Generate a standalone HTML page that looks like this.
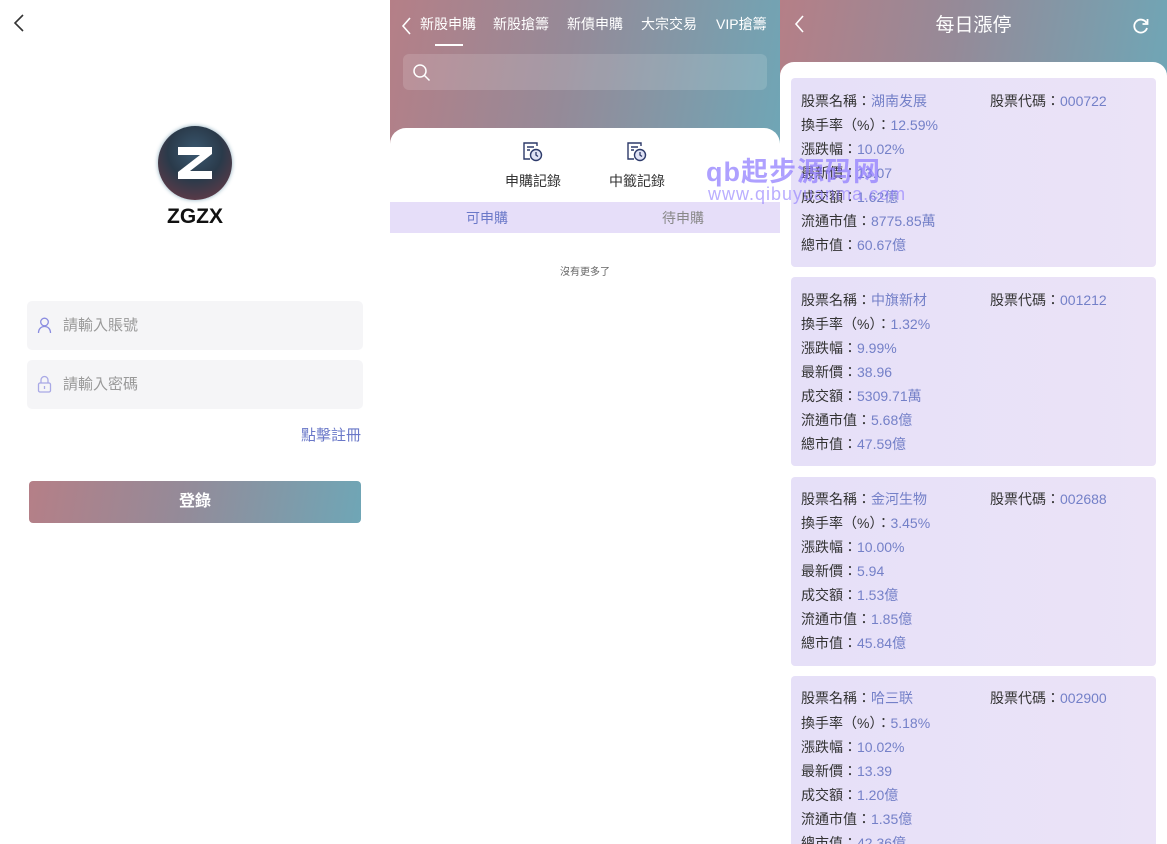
<!DOCTYPE html>
<html><head><meta charset="utf-8"><style>
*{margin:0;padding:0;box-sizing:border-box}
body{width:1167px;height:844px;overflow:hidden;position:relative;background:#fff;font-family:"Liberation Sans","Noto Sans CJK TC",sans-serif;}
.abs{position:absolute}
.grad{background:linear-gradient(100deg,#b57f87 0%,#958a98 45%,#6fa6b6 100%)}
.p1{left:0;top:0;width:390px;height:844px;background:#fff}
.p2{left:390px;top:0;width:390px;height:844px;background:#fff;overflow:hidden}
.p3{left:780px;top:0;width:387px;height:844px;background:#fff;overflow:hidden}
.inp{position:absolute;left:27px;width:336px;height:49px;background:#f5f5f7;border-radius:5px;font-size:15px;color:#999;line-height:49px;padding-left:36px}
.tab{position:absolute;top:14px;font-size:14px;color:#fff;white-space:nowrap}
.card{position:absolute;left:11px;width:365px;height:189px;background:linear-gradient(90deg,#e6e0f8,#ebe3f7);border-radius:4px;font-size:14px;color:#333}
.card div{position:absolute;left:10px;white-space:nowrap}
.card span{color:#7480c8}
</style></head><body>
<div class="abs p1">
<svg class="abs" style="left:12px;top:13px" width="16" height="20"><path d="M11 2L3 10l8 8" fill="none" stroke="#333" stroke-width="1.6"/></svg>
<div class="abs" style="left:158px;top:126px;width:74px;height:74px;border-radius:50%;background:radial-gradient(circle at 50% 35%,#3a5870 0%,#2a3a4a 45%,#5a3a48 80%,#c0909c 100%);box-shadow:0 0 4px #8ab">
<svg style="position:absolute;left:18px;top:21px" width="38" height="32"><path d="M2 0h34v7L14 24h22v8H2v-7L24 8H2z" fill="#fff"/></svg></div>
<div class="abs" style="left:0;width:390px;top:205px;text-align:center;font-weight:bold;font-size:21px;color:#111">ZGZX</div>
<div class="inp" style="top:301px">請輸入賬號</div>
<svg class="abs" style="left:37px;top:317px" width="15" height="17"><circle cx="7.5" cy="5" r="3.8" fill="none" stroke="#8a8ce0" stroke-width="1.3"/><path d="M1.5 16c0-4 2.5-6.5 6-6.5s6 2.5 6 6.5" fill="none" stroke="#8a8ce0" stroke-width="1.3"/></svg>
<div class="inp" style="top:360px">請輸入密碼</div>
<svg class="abs" style="left:37px;top:375px" width="15" height="18"><path d="M4 8V5a3.5 3.5 0 017 0v3" fill="none" stroke="#a9a9e6" stroke-width="1.3"/><rect x="1.5" y="8" width="12" height="9" rx="1.5" fill="none" stroke="#a9a9e6" stroke-width="1.3"/><path d="M7.5 11v3" stroke="#a9a9e6" stroke-width="1.3"/></svg>
<div class="abs" style="right:29px;top:424px;font-size:15px;color:#6a78c8">點擊註冊</div>
<div class="abs grad" style="left:29px;top:481px;width:332px;height:42px;border-radius:4px;color:#fff;font-weight:bold;font-size:16px;text-align:center;line-height:42px">登錄</div>
</div>
<div class="abs p2">
<div class="abs grad" style="left:0;top:0;width:390px;height:150px"></div>
<svg class="abs" style="left:10px;top:16px" width="14" height="20"><path d="M10 2L3 10l7 8" fill="none" stroke="#fff" stroke-width="1.6"/></svg>
<div class="tab" style="left:30px">新股申購</div>
<div class="tab" style="left:103px">新股搶籌</div>
<div class="tab" style="left:177px">新債申購</div>
<div class="tab" style="left:251px">大宗交易</div>
<div class="tab" style="left:326px">VIP搶籌</div>
<div class="abs" style="left:45px;top:44px;width:28px;height:2px;background:#fff"></div>
<div class="abs" style="left:13px;top:54px;width:364px;height:36px;border-radius:6px;background:rgba(255,255,255,.14)"></div>
<svg class="abs" style="left:22px;top:63px" width="20" height="20"><circle cx="8" cy="8" r="6" fill="none" stroke="#fff" stroke-width="1.5"/><path d="M12.5 12.5l5 5" stroke="#fff" stroke-width="1.5"/></svg>
<div class="abs" style="left:0;top:128px;width:390px;height:720px;background:#fff;border-radius:16px 16px 0 0"></div>
<svg class="abs" style="left:132px;top:141px" width="22" height="22"><path d="M15 5V2H2v16h6" fill="none" stroke="#2d3a6a" stroke-width="1.4"/><path d="M5 6h7M5 9h3" stroke="#2d3a6a" stroke-width="1.4"/><circle cx="14" cy="14" r="5.5" fill="#dfe2f5" stroke="#2d3a6a" stroke-width="1.4"/><path d="M14 11v3l2 1.5" fill="none" stroke="#2d3a6a" stroke-width="1.3"/></svg>
<svg class="abs" style="left:236px;top:141px" width="22" height="22"><path d="M15 5V2H2v16h6" fill="none" stroke="#2d3a6a" stroke-width="1.4"/><path d="M5 6h7M5 9h3" stroke="#2d3a6a" stroke-width="1.4"/><circle cx="14" cy="14" r="5.5" fill="#dfe2f5" stroke="#2d3a6a" stroke-width="1.4"/><path d="M14 11v3l2 1.5" fill="none" stroke="#2d3a6a" stroke-width="1.3"/></svg>
<div class="abs" style="left:115px;top:171px;font-size:14px;color:#333">申購記錄</div>
<div class="abs" style="left:219px;top:171px;font-size:14px;color:#333">中籤記錄</div>
<div class="abs" style="left:0;top:202px;width:390px;height:31px;background:#e6def9"></div>
<div class="abs" style="left:76px;top:208px;font-size:14px;color:#6a78c8">可申購</div>
<div class="abs" style="left:272px;top:208px;font-size:14px;color:#888">待申購</div>
<div class="abs" style="left:0;width:390px;top:263px;text-align:center;font-size:10px;color:#666">沒有更多了</div>
</div>
<div class="abs p3">
<div class="abs grad" style="left:0;top:0;width:387px;height:90px"></div>
<svg class="abs" style="left:13px;top:14px" width="14" height="20"><path d="M10 2L3 10l7 8" fill="none" stroke="#fff" stroke-width="1.6"/></svg>
<div class="abs" style="left:0;width:387px;top:10px;text-align:center;font-size:19px;color:#fff">每日漲停</div>
<svg class="abs" style="left:351px;top:16px" width="20" height="20"><path d="M15.5 7A6.5 6.5 0 1 0 16 12" fill="none" stroke="#fff" stroke-width="1.8"/><path d="M16.5 3v5h-5" fill="none" stroke="#fff" stroke-width="1.8"/></svg>
<div class="abs" style="left:0;top:62px;width:387px;height:800px;background:#fff;border-radius:14px 14px 0 0"></div>
<div class="card" style="top:78px">
<div style="top:13px">股票名稱：<span>湖南发展</span></div><div style="left:199px;top:13px">股票代碼：<span>000722</span></div>
<div style="top:37px">換手率（%）：<span>12.59%</span></div>
<div style="top:61px">漲跌幅：<span>10.02%</span></div>
<div style="top:85px">最新價：<span>13.07</span></div>
<div style="top:109px">成交額：<span>1.62億</span></div>
<div style="top:133px">流通市值：<span>8775.85萬</span></div>
<div style="top:157px">總市值：<span>60.67億</span></div>
</div>
<div class="card" style="top:277px">
<div style="top:13px">股票名稱：<span>中旗新材</span></div><div style="left:199px;top:13px">股票代碼：<span>001212</span></div>
<div style="top:37px">換手率（%）：<span>1.32%</span></div>
<div style="top:61px">漲跌幅：<span>9.99%</span></div>
<div style="top:85px">最新價：<span>38.96</span></div>
<div style="top:109px">成交額：<span>5309.71萬</span></div>
<div style="top:133px">流通市值：<span>5.68億</span></div>
<div style="top:157px">總市值：<span>47.59億</span></div>
</div>
<div class="card" style="top:477px">
<div style="top:12px">股票名稱：<span>金河生物</span></div><div style="left:199px;top:12px">股票代碼：<span>002688</span></div>
<div style="top:36px">換手率（%）：<span>3.45%</span></div>
<div style="top:60px">漲跌幅：<span>10.00%</span></div>
<div style="top:84px">最新價：<span>5.94</span></div>
<div style="top:108px">成交額：<span>1.53億</span></div>
<div style="top:132px">流通市值：<span>1.85億</span></div>
<div style="top:156px">總市值：<span>45.84億</span></div>
</div>
<div class="card" style="top:676px">
<div style="top:12px">股票名稱：<span>哈三联</span></div><div style="left:199px;top:12px">股票代碼：<span>002900</span></div>
<div style="top:37px">換手率（%）：<span>5.18%</span></div>
<div style="top:61px">漲跌幅：<span>10.02%</span></div>
<div style="top:85px">最新價：<span>13.39</span></div>
<div style="top:109px">成交額：<span>1.20億</span></div>
<div style="top:133px">流通市值：<span>1.35億</span></div>
<div style="top:157px">總市值：<span>42.36億</span></div>
</div>
</div>
<div class="abs" style="left:706px;top:150px;font-size:27px;font-weight:bold;color:rgba(140,120,255,.7);white-space:nowrap;letter-spacing:1px">qb起步源码网</div>
<div class="abs" style="left:708px;top:184px;font-size:18px;color:rgba(140,120,255,.6);white-space:nowrap;letter-spacing:1px">www.qibuyuanma.com</div>
</body></html>
